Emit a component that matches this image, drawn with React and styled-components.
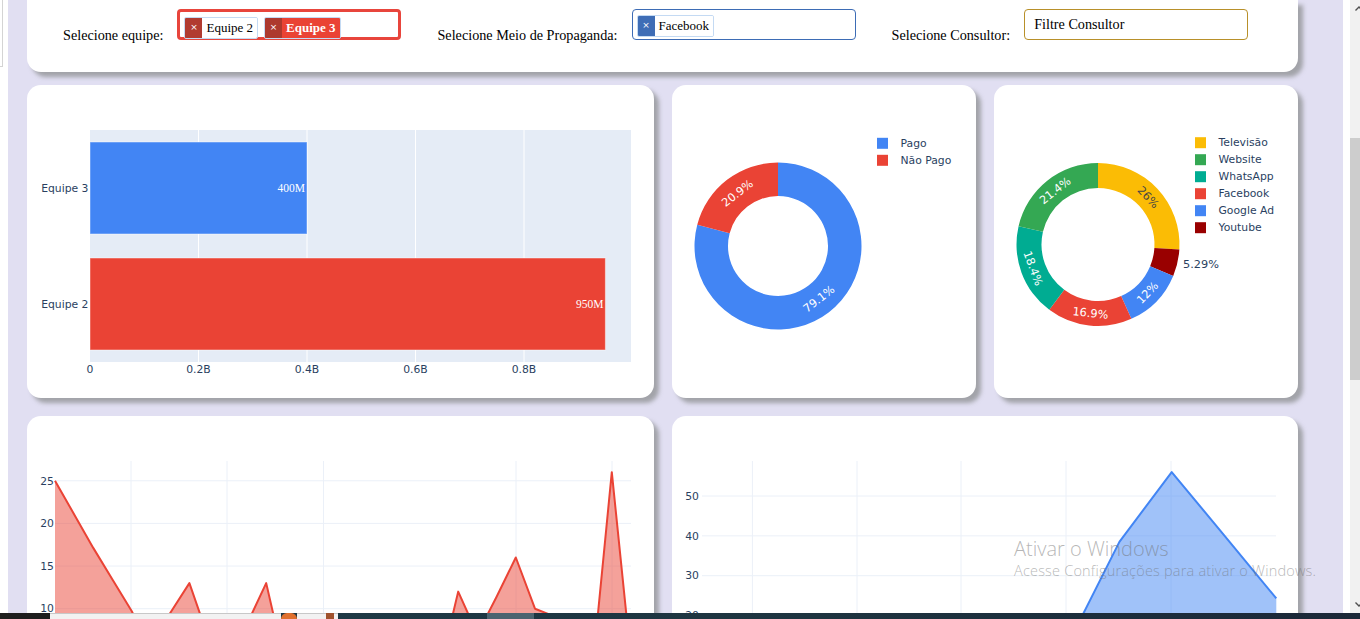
import React from "react";
import styled, { createGlobalStyle } from "styled-components";

const GlobalStyle = createGlobalStyle`
  html, body {
    margin: 0;
    padding: 0;
    overflow: hidden;
    background: #fff;
  }
`;

const PLOT_FONT = `"DejaVu Sans", Verdana, sans-serif`;
const PLOT_INK = "#2a3f5f";

const Screen = styled.div`
  width: 1360px;
  height: 619px;
  display: flex;
  flex-direction: column;
  overflow: hidden;
`;

const Viewport = styled.div`
  display: flex;
  height: 613px;
  flex-shrink: 0;
`;

const Margin = styled.div`
  width: ${(p) => p.$w}px;
  flex-shrink: 0;
  background: #fff;
`;

const EdgeTab = styled.div`
  width: 2px;
  height: 66px;
  border-right: 1px solid #d4d4d4;
  border-bottom: 1px solid #d4d4d4;
`;

const Page = styled.div`
  position: relative;
  width: 1335px;
  flex-shrink: 0;
  box-sizing: border-box;
  padding: 0 45px 0 19px;
  background: #e1dff2;
  overflow: hidden;
`;

const Scrollbar = styled.div`
  width: 17px;
  flex-shrink: 0;
  display: flex;
  flex-direction: column;
  background: #f1f1f1;
`;

const ScrollArrow = styled.div`
  height: 17px;
  display: flex;
  align-items: center;
  justify-content: center;
`;

const Thumb = styled.div`
  margin-top: 121px;
  height: 242px;
  background: #cdcdcd;
`;

const Spacer = styled.div`
  flex: 1;
`;

const Taskbar = styled.div`
  display: flex;
  height: 6px;
  flex-shrink: 0;
  background: linear-gradient(90deg, #1f3c47 0%, #1e3440 60%, #1b2838 100%);
`;

const TaskSeg = styled.div`
  width: ${(p) => p.$w}px;
  flex-shrink: 0;
  background: ${(p) => p.$bg};
  border-radius: ${(p) => (p.$round ? "8px 8px 0 0" : "0")};
  border-top: ${(p) => (p.$light ? "1px solid #c8c8c8" : "none")};
  box-sizing: border-box;
`;

const Watermark = styled.div`
  position: absolute;
  left: 1006px;
  top: 535px;
  color: rgba(110, 110, 110, 0.5);
  font-family: "Open Sans", "Noto Sans", sans-serif;
  font-weight: 300;
  pointer-events: none;
  white-space: nowrap;
`;

const WatermarkTitle = styled.div`
  font-size: 20px;
  line-height: 27px;
`;

const WatermarkText = styled.div`
  font-size: 14.5px;
  line-height: 18px;
  letter-spacing: 0.2px;
`;

const FilterCard = styled.div`
  height: 72px;
  box-sizing: border-box;
  margin-bottom: 13px;
  padding: 9px 0 0 36px;
  display: flex;
  gap: 36px;
  background: #fff;
  border-radius: 0 0 14px 14px;
  box-shadow: 5px 5px 4px rgba(120, 124, 120, 0.6);
`;

const Field = styled.div`
  display: flex;
  align-items: flex-start;
  gap: 14px;
`;

const FieldLabel = styled.span`
  margin-top: 18px;
  font-family: "Liberation Serif", serif;
  font-size: 14.2px;
  line-height: 17px;
  color: #000;
  white-space: nowrap;
`;

const SelectBox = styled.div`
  width: 224px;
  height: 31px;
  box-sizing: border-box;
  padding: 5px 4px;
  display: flex;
  align-items: flex-start;
  gap: 6px;
  border: ${(p) => p.$bw}px solid ${(p) => p.$color};
  border-radius: 4px;
  background: #fff;
`;

const Placeholder = styled.span`
  padding-left: 5px;
  font-family: "Liberation Serif", serif;
  font-size: 14.2px;
  line-height: 19px;
  color: #000;
`;

const Chip = styled.div`
  display: flex;
  height: 22px;
  box-sizing: border-box;
  border: 1px solid #c4daf3;
  border-radius: 2px;
  overflow: hidden;
`;

const ChipX = styled.span`
  width: 17px;
  display: flex;
  align-items: center;
  justify-content: center;
  padding-bottom: 3px;
  box-sizing: border-box;
  background: ${(p) => p.$bg};
  color: #fff;
  font-family: "DejaVu Sans", sans-serif;
  font-size: 9px;
`;

const ChipText = styled.span`
  padding: 0 4px;
  font-family: "Liberation Serif", serif;
  font-size: 13px;
  line-height: 20px;
  font-weight: ${(p) => (p.$active ? 700 : 400)};
  color: ${(p) => (p.$active ? "#fff" : "#000")};
  background: ${(p) => (p.$active ? "#ea4335" : "#fff")};
`;

const Board = styled.div`
  display: grid;
  grid-template-columns: repeat(4, 1fr);
  gap: 18px;
`;

const Card = styled.div`
  grid-column: span ${(p) => p.$span};
  height: 313px;
  background: #fff;
  border-radius: 14px;
  box-shadow: 5px 5px 4px rgba(120, 124, 120, 0.6);
  overflow: hidden;
`;

const ChartSvg = styled.svg`
  display: block;
  font-family: ${PLOT_FONT};
`;

const polar = (cx, cy, r, a) => {
  const t = (a * Math.PI) / 180;
  return [cx + r * Math.sin(t), cy - r * Math.cos(t)];
};

const arcPath = (cx, cy, r0, r1, a0, a1) => {
  const large = a1 - a0 > 180 ? 1 : 0;
  const [x1, y1] = polar(cx, cy, r1, a0);
  const [x2, y2] = polar(cx, cy, r1, a1);
  const [x3, y3] = polar(cx, cy, r0, a1);
  const [x4, y4] = polar(cx, cy, r0, a0);
  return `M${x1} ${y1}A${r1} ${r1} 0 ${large} 1 ${x2} ${y2}L${x3} ${y3}A${r0} ${r0} 0 ${large} 0 ${x4} ${y4}Z`;
};

function TeamBars() {
  const x0 = 63;
  const perB = 542.5;
  const bars = [
    { name: "Equipe 3", value: 0.4, text: "400M", color: "#4285f4", y: 57 },
    { name: "Equipe 2", value: 0.95, text: "950M", color: "#ea4335", y: 173 },
  ];
  const ticks = [0, 0.2, 0.4, 0.6, 0.8];
  return (
    <ChartSvg width="627" height="313">
      <rect x={x0} y="45" width="541" height="232" fill="#e5ecf6" />
      {ticks.slice(1).map((t) => (
        <line key={t} x1={x0 + t * perB} x2={x0 + t * perB} y1="45" y2="277" stroke="#fff" strokeWidth="1" />
      ))}
      {bars.map((b) => (
        <g key={b.name}>
          <rect x={x0} y={b.y} width={b.value * perB} height="92" fill={b.color} stroke="rgba(255,255,255,0.45)" strokeWidth="1" />
          <text x={x0 + b.value * perB - 2} y={b.y + 46} dy="0.35em" textAnchor="end" fill="#fff" fontFamily='"Liberation Serif", serif' fontSize="11.5">
            {b.text}
          </text>
          <text x="61.5" y={b.y + 46} dy="0.35em" textAnchor="end" fill={PLOT_INK} fontSize="10.8">
            {b.name}
          </text>
        </g>
      ))}
      {ticks.map((t) => (
        <text key={t} x={x0 + t * perB} y="284" dy="0.35em" textAnchor="middle" fill={PLOT_INK} fontSize="10.8">
          {t === 0 ? "0" : `${t}B`}
        </text>
      ))}
    </ChartSvg>
  );
}

function Donut({ width, cx, cy, r0, r1, slices, legend }) {
  let start = 0;
  const parts = slices.map((s) => {
    const a0 = start;
    const a1 = start + s.pct * 3.6;
    start = a1;
    const mid = (a0 + a1) / 2;
    const [tx, ty] = polar(cx, cy, (r0 + r1) / 2, mid);
    const rot = mid > 90 && mid < 270 ? mid - 180 : mid;
    return { ...s, d: arcPath(cx, cy, r0, r1, a0, a1), tx, ty, rot };
  });
  return (
    <ChartSvg width={width} height="313">
      {parts.map((p) => (
        <path key={p.label} d={p.d} fill={p.color} />
      ))}
      {parts.map((p) =>
        p.outside ? (
          <text key={p.label} x={p.outside[0]} y={p.outside[1]} dy="0.35em" fill={PLOT_INK} fontSize="11.3">
            {p.text}
          </text>
        ) : (
          <text
            key={p.label}
            transform={`translate(${p.tx} ${p.ty}) rotate(${p.rot})`}
            dy="0.35em"
            textAnchor="middle"
            fill={p.ink || "#fff"}
            fontSize="11.3"
          >
            {p.text}
          </text>
        )
      )}
      {legend.order.map((name, i) => {
        const s = slices.find((x) => x.label === name);
        const y = legend.y + i * 17;
        return (
          <g key={name}>
            <rect x={legend.x} y={y - 5.5} width="11" height="11" fill={s.color} />
            <text x={legend.x + 23.5} y={y} dy="0.35em" fill={PLOT_INK} fontSize="10.8">
              {name}
            </text>
          </g>
        );
      })}
    </ChartSvg>
  );
}

const paySlices = [
  { label: "Pago", pct: 79.1, color: "#4285f4", text: "79.1%" },
  { label: "Não Pago", pct: 20.9, color: "#ea4335", text: "20.9%" },
];

const mediaSlices = [
  { label: "Televisão", pct: 26, color: "#fbbc05", text: "26%", ink: "#444" },
  { label: "Youtube", pct: 5.29, color: "#990000", text: "5.29%", outside: [189, 179] },
  { label: "Google Ad", pct: 12, color: "#4285f4", text: "12%" },
  { label: "Facebook", pct: 16.9, color: "#ea4335", text: "16.9%" },
  { label: "WhatsApp", pct: 18.4, color: "#00ac92", text: "18.4%" },
  { label: "Website", pct: 21.41, color: "#34a853", text: "21.4%" },
];

function AreaChart({ width, values, x0, step, toY, ticks, vgrid, hx, color, fill }) {
  const pts = values.map((v, i) => [x0 + i * step, toY(v)]);
  const base = toY(0);
  const line = pts.map((p, i) => `${i ? "L" : "M"}${p[0]} ${p[1]}`).join("");
  const area = `M${pts[0][0]} ${base}${pts.map((p) => `L${p[0]} ${p[1]}`).join("")}L${pts[pts.length - 1][0]} ${base}Z`;
  return (
    <ChartSvg width={width} height="313">
      {vgrid.map((x) => (
        <line key={x} x1={x} x2={x} y1="45" y2={base} stroke="#ebf0f8" strokeWidth="1" />
      ))}
      {ticks.map((t) => (
        <g key={t}>
          <line x1={hx[0]} x2={hx[1]} y1={toY(t)} y2={toY(t)} stroke="#ebf0f8" strokeWidth="1" />
          <text x="27" y={toY(t)} dy="0.35em" textAnchor="end" fill={PLOT_INK} fontSize="10.8">
            {t}
          </text>
        </g>
      ))}
      <path d={area} fill={fill} />
      <path d={line} fill="none" stroke={color} strokeWidth="2" strokeLinejoin="round" />
    </ChartSvg>
  );
}

const dailyValues = [
  25, 21.05, 17.1, 13.4, 9.7, 5, 9.5, 13, 6.5, 4, 8.2, 13, 3.2, 5, 3, 6, 4, 7, 5, 4, 2.5, 12, 7, 11.4, 16, 10, 9.1,
  5, 3, 26, 4,
];

const monthlyValues = [8, 12, 6, 15, 10, 5, 9, 12.4, 38.5, 56, 40.2, 24.3];

function UpArrow() {
  return (
    <svg width="8" height="5" viewBox="0 0 8 5">
      <path d="M0.5 4.5L4 1L7.5 4.5" fill="none" stroke="#505050" strokeWidth="1.4" />
    </svg>
  );
}

function DownArrow() {
  return (
    <svg width="8" height="5" viewBox="0 0 8 5">
      <path d="M0.5 0.5L4 4L7.5 0.5" fill="none" stroke="#505050" strokeWidth="1.4" />
    </svg>
  );
}

export default function App() {
  return (
    <Screen>
      <GlobalStyle />
      <Viewport>
        <Margin $w={8}>
          <EdgeTab />
        </Margin>
        <Page>
          <FilterCard>
            <Field>
              <FieldLabel>Selecione equipe:</FieldLabel>
              <SelectBox $bw={3} $color="#e8453c">
                <Chip>
                  <ChipX $bg="#b13b30">×</ChipX>
                  <ChipText>Equipe 2</ChipText>
                </Chip>
                <Chip>
                  <ChipX $bg="#ad392e">×</ChipX>
                  <ChipText $active>Equipe 3</ChipText>
                </Chip>
              </SelectBox>
            </Field>
            <Field>
              <FieldLabel>Selecione Meio de Propaganda:</FieldLabel>
              <SelectBox $bw={1} $color="#3d6cb5">
                <Chip>
                  <ChipX $bg="#3e6db6">×</ChipX>
                  <ChipText>Facebook</ChipText>
                </Chip>
              </SelectBox>
            </Field>
            <Field>
              <FieldLabel>Selecione Consultor:</FieldLabel>
              <SelectBox $bw={1} $color="#b8902a">
                <Placeholder>Filtre Consultor</Placeholder>
              </SelectBox>
            </Field>
          </FilterCard>

          <Board>
            <Card $span={2}>
              <TeamBars />
            </Card>
            <Card $span={1}>
              <Donut
                width={303}
                cx={106}
                cy={161}
                r0={50}
                r1={83.5}
                slices={paySlices}
                legend={{ x: 205, y: 58.3, order: ["Pago", "Não Pago"] }}
              />
            </Card>
            <Card $span={1}>
              <Donut
                width={304}
                cx={104}
                cy={159.5}
                r0={56.5}
                r1={81.5}
                slices={mediaSlices}
                legend={{
                  x: 201,
                  y: 57.7,
                  order: ["Televisão", "Website", "WhatsApp", "Facebook", "Google Ad", "Youtube"],
                }}
              />
            </Card>
            <Card $span={2}>
              <AreaChart
                width={627}
                values={dailyValues}
                x0={28}
                step={19.2}
                toY={(v) => 192.7 - (v - 10) * 8.53}
                ticks={[10, 15, 20, 25]}
                vgrid={[104, 200, 296.5, 489, 585]}
                hx={[28, 604]}
                color="#ea4335"
                fill="rgba(234, 67, 53, 0.5)"
              />
            </Card>
            <Card $span={2}>
              <AreaChart
                width={626}
                values={monthlyValues}
                x0={29}
                step={52.3}
                toY={(v) => 80 - (v - 50) * 3.985}
                ticks={[20, 30, 40, 50]}
                vgrid={[80.4, 185, 289, 394, 499]}
                hx={[30, 604]}
                color="#4285f4"
                fill="rgba(66, 133, 244, 0.5)"
              />
            </Card>
          </Board>

          <Watermark>
            <WatermarkTitle>Ativar o Windows</WatermarkTitle>
            <WatermarkText>Acesse Configurações para ativar o Windows.</WatermarkText>
          </Watermark>
        </Page>
        <Margin $w={7} />
        <Scrollbar>
          <ScrollArrow>
            <UpArrow />
          </ScrollArrow>
          <Thumb />
          <Spacer />
          <ScrollArrow>
            <DownArrow />
          </ScrollArrow>
        </Scrollbar>
      </Viewport>
      <Taskbar>
        <TaskSeg $w={50} $bg="#1e1e1e" />
        <TaskSeg $w={231} $bg="#f2f2f2" $light />
        <TaskSeg $w={16} $bg="#e0702e" $round />
        <TaskSeg $w={29} $bg="#f2f2f2" $light />
        <TaskSeg $w={8} $bg="#a0522d" />
        <TaskSeg $w={4} $bg="#f2f2f2" $light />
        <TaskSeg $w={149} $bg="transparent" />
        <TaskSeg $w={47} $bg="#4c6470" />
      </Taskbar>
    </Screen>
  );
}
